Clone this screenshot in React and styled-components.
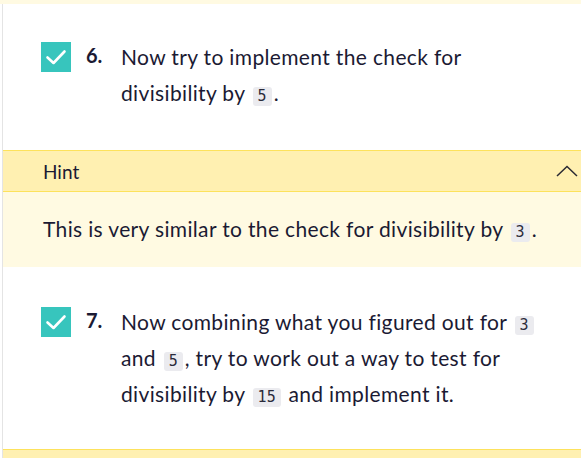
import React from "react"
import styled, { createGlobalStyle } from "styled-components"

const GlobalStyle = createGlobalStyle`
  body {
    margin: 0;
    background: #ffffff;
    font-family: Lato, "Noto Sans", sans-serif;
    color: #1b1a33;
  }
`

const Check = () => (
  <svg width="30" height="30" viewBox="0 0 30 30">
    <path d="M6.5 15.5 L12.5 21 L23.5 9.5" fill="none" stroke="#fff" strokeWidth="2.6" strokeLinecap="round" strokeLinejoin="round" />
  </svg>
)

const Chevron = () => (
  <svg width="22" height="12" viewBox="0 0 22 12">
    <path d="M1 11 L11 1.5 L21 11" fill="none" stroke="#2a2a33" strokeWidth="1.5" />
  </svg>
)

export default function App() {
  return (
    <>
      <GlobalStyle />
      <Page>
        <TopStrip />
        <Column>
          <Step pad="35px 20px 39px 38px">
            <CheckBox>
              <Check />
            </CheckBox>
            <Num>6.</Num>
            <StepText>
              Now try to implement the check for divisibility by <Code>5</Code>.
            </StepText>
          </Step>
          <HintBar>
            <HintLabel>Hint</HintLabel>
            <Chevron />
          </HintBar>
          <HintBody>
            This is very similar to the check for divisibility by <Code>3</Code>.
          </HintBody>
          <Step pad="37px 20px 37px 38px">
            <CheckBox>
              <Check />
            </CheckBox>
            <Num>7.</Num>
            <StepText>
              Now combining what you figured out for <Code>3</Code> and <Code>5</Code>, try to work out a way to test for
              divisibility by <Code>15</Code> and implement it.
            </StepText>
          </Step>
          <BottomStrip />
        </Column>
      </Page>
    </>
  )
}

const Page = styled.div`
  width: 581px;
  height: 458px;
  overflow: hidden;
`

const TopStrip = styled.div`
  height: 4px;
  background: #fffae2;
`

const Column = styled.div`
  margin-left: 2px;
  border-left: 1px solid #e4e4e4;
`

const Step = styled.div`
  display: flex;
  align-items: flex-start;
  padding: ${props => props.pad};
`

const CheckBox = styled.div`
  flex: none;
  width: 30px;
  height: 30px;
  margin-top: 3px;
  background: #37c5bd;
  display: flex;
`

const Num = styled.div`
  flex: none;
  width: 35px;
  margin-left: 15px;
  font-weight: 700;
  font-size: 20px;
  line-height: 32px;
`

const StepText = styled.div`
  width: 420px;
  font-size: 21px;
  letter-spacing: 0.35px;
  line-height: 36px;
`

const Code = styled.code`
  display: inline-block;
  font-family: "DejaVu Sans Mono", monospace;
  font-size: 15px;
  letter-spacing: 0;
  line-height: 19px;
  color: #2b2b3a;
  background: #ebebef;
  border-radius: 3px;
  padding: 0 5px;
  margin: 0 2px;
`

const HintBar = styled.div`
  display: flex;
  align-items: center;
  justify-content: space-between;
  height: 40px;
  padding: 0 3px 0 40px;
  background: #fff0b1;
  border-top: 1px solid #fde25c;
  border-bottom: 1px solid #fde25c;
`

const HintLabel = styled.span`
  font-size: 19px;
`

const HintBody = styled.div`
  padding: 19px 20px 20px 40px;
  background: #fffae2;
  font-size: 21px;
  letter-spacing: 0.35px;
  line-height: 36px;
`

const BottomStrip = styled.div`
  height: 12px;
  background: #fff0b1;
  border-top: 1px solid #fde25c;
`
